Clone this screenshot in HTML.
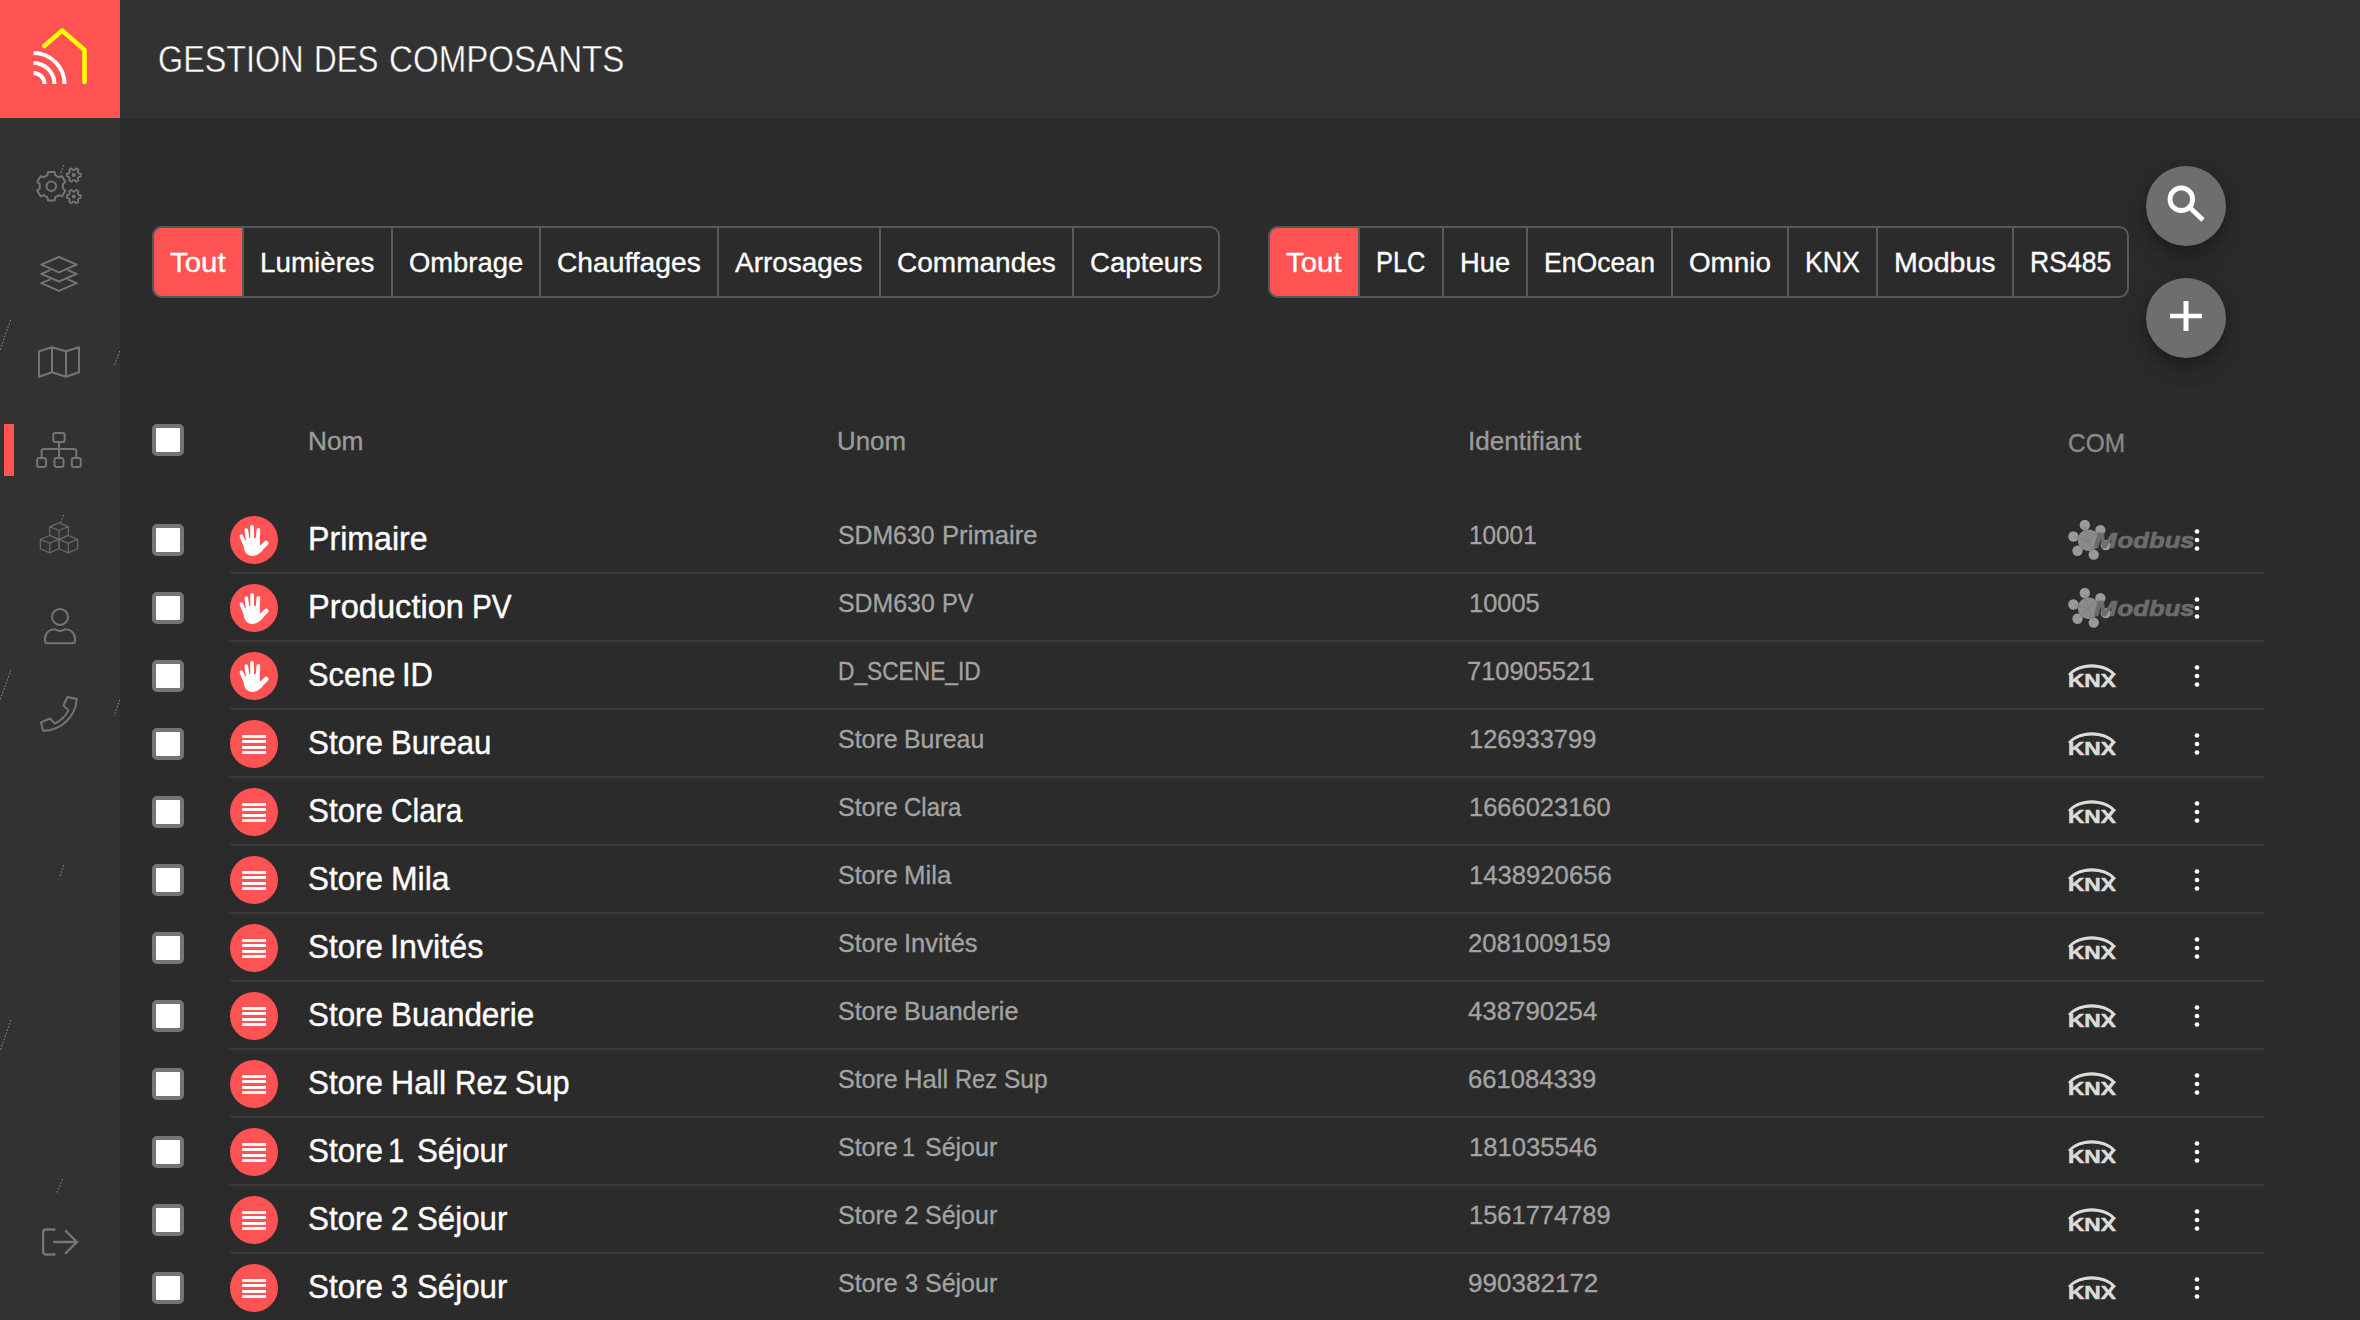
<!DOCTYPE html>
<html lang="fr"><head><meta charset="utf-8"><title>Gestion des composants</title>
<style>
html,body{margin:0;padding:0}
body{width:2360px;height:1320px;overflow:hidden;background:#2b2b2b;position:relative;font-family:"Liberation Sans",sans-serif;color:#fff}
h1{margin:0;font-weight:400}
.t{position:absolute;left:0;line-height:0;white-space:nowrap;font-weight:400}
.t span{position:absolute;top:0;line-height:0;transform-origin:0 0;white-space:nowrap}
h1.t{font-size:37.62px;color:#fff;-webkit-text-stroke:0.45px #323232}
.tab{font-size:28.42px;color:#fff;-webkit-text-stroke:0.35px #fff}
.th{font-size:25.98px;color:#9c9c9c;-webkit-text-stroke:0.32px #9c9c9c}
.nm{font-size:32.48px;color:#fff;-webkit-text-stroke:0.4px #fff}
.td{font-size:25.98px;color:#a3a3a3;-webkit-text-stroke:0.32px #a3a3a3}
#side{position:absolute;left:0;top:0;width:120px;height:1320px;background:#323232}
#head{position:absolute;left:120px;top:0;width:2240px;height:118px;background:#323232}
#logo{position:absolute;left:0;top:0;width:120px;height:118px;background:#ff5252}
#act{position:absolute;left:4px;top:424px;width:10px;height:52px;background:#ff5252}
.grp{position:absolute;top:226px;height:68px;border:2px solid #595959;border-radius:10px}
.grp i{position:absolute;top:0;width:2px;height:68px;background:#595959}
.grp b{position:absolute;top:-2px;left:-2px;height:68px;background:#ff5252;border:2px solid #4f5959;border-right-width:1px;border-radius:10px 0 0 10px}
.cb{position:absolute;left:152px;width:24px;height:24px;border:4px solid #757575;border-radius:5px;background:#fff}
.ln{position:absolute;left:230px;width:2034px;height:2px;background:#393939}
.av{position:absolute;left:230px;width:48px;height:48px;border-radius:50%;background:#ff5252}
.fab{position:absolute;left:2146px;width:80px;height:80px;border-radius:50%;background:#6e6e6e;box-shadow:0 6px 10px -2px rgba(0,0,0,.2),0 12px 20px 0 rgba(0,0,0,.14),0 2px 36px 0 rgba(0,0,0,.12)}
svg{position:absolute;left:0;top:0;overflow:visible}
</style></head><body>
<div id="head"></div><div id="side"></div>
<header>
<h1 class="t" style="top:59.06px"><span style="left:158.14px;transform:scaleX(0.8605)">GESTION</span> <span style="left:313.77px;transform:scaleX(0.8337)">DES</span> <span style="left:388.57px;transform:scaleX(0.8801)">COMPOSANTS</span></h1>
</header>
<nav><div id="logo"></div><div id="act"></div></nav>
<main>
<section class="filters">
<div class="grp" role="group" aria-label="Type" style="left:152px;width:1064.17px"><b style="width:87.92px"></b><i style="left:87.92px"></i><i style="left:236.57px"></i><i style="left:384.85px"></i><i style="left:562.89px"></i><i style="left:724.53px"></i><i style="left:917.61px"></i></div>
<div class="t tab" style="top:261.95px"><span style="left:170.00px;transform:scaleX(1.0364)">Tout</span></div>
<div class="t tab" style="top:261.95px"><span style="left:259.96px;transform:scaleX(0.9788)">Lumières</span></div>
<div class="t tab" style="top:261.95px"><span style="left:408.61px;transform:scaleX(0.9642)">Ombrage</span></div>
<div class="t tab" style="top:261.95px"><span style="left:556.86px;transform:scaleX(0.9931)">Chauffages</span></div>
<div class="t tab" style="top:261.95px"><span style="left:734.89px;transform:scaleX(0.9840)">Arrosages</span></div>
<div class="t tab" style="top:261.95px"><span style="left:896.54px;transform:scaleX(0.9863)">Commandes</span></div>
<div class="t tab" style="top:261.95px"><span style="left:1089.64px;transform:scaleX(0.9741)">Capteurs</span></div>
<div class="grp" role="group" aria-label="Protocole" style="left:1268px;width:857.38px"><b style="width:87.92px"></b><i style="left:87.92px"></i><i style="left:172.00px"></i><i style="left:256.26px"></i><i style="left:401.09px"></i><i style="left:517.15px"></i><i style="left:606.48px"></i><i style="left:742.30px"></i></div>
<div class="t tab" style="top:261.95px"><span style="left:1286.00px;transform:scaleX(1.0364)">Tout</span></div>
<div class="t tab" style="top:261.78px;font-size:28.92px"><span style="left:1376.16px;transform:scaleX(0.8782)">PLC</span></div>
<div class="t tab" style="top:261.95px"><span style="left:1460.08px;transform:scaleX(0.9614)">Hue</span></div>
<div class="t tab" style="top:261.95px"><span style="left:1544.38px;transform:scaleX(0.9366)">EnOcean</span></div>
<div class="t tab" style="top:261.95px"><span style="left:1689.12px;transform:scaleX(0.9783)">Omnio</span></div>
<div class="t tab" style="top:261.78px;font-size:28.92px"><span style="left:1805.31px;transform:scaleX(0.9234)">KNX</span></div>
<div class="t tab" style="top:261.95px"><span style="left:1894.47px;transform:scaleX(1.0051)">Modbus</span></div>
<div class="t tab" style="top:261.78px;font-size:28.92px"><span style="left:2030.46px;transform:scaleX(0.9185)">RS485</span></div>
<div class="fab" style="top:166px"></div><div class="fab" style="top:278px"></div>
</section>
<section class="list">
<div class="head"><div class="cb" style="top:424px"></div>
<div class="t th" style="top:441.20px"><span style="left:307.97px;transform:scaleX(1.0129)">Nom</span></div>
<div class="t th" style="top:441.20px"><span style="left:837.01px;transform:scaleX(0.9952)">Unom</span></div>
<div class="t th" style="top:441.20px"><span style="left:1467.99px;transform:scaleX(1.0048)">Identifiant</span></div>
<div class="t th" style="top:443.04px;font-size:26.44px;color:#8a8a8a;-webkit-text-stroke-color:#8a8a8a"><span style="left:2068.07px;transform:scaleX(0.9252)">COM</span></div>
</div>
<div class="row"><div class="cb" style="top:524px"></div><div class="av" style="top:516px"></div>
<div class="t nm" style="top:538.95px"><span style="left:308.02px;transform:scaleX(0.9898)">Primaire</span></div>
<div class="t td" style="top:535.40px"><span style="left:838.05px;transform:scaleX(0.9549)">SDM630</span> <span style="left:941.86px;transform:scaleX(0.9877)">Primaire</span></div>
<div class="t td" style="top:535.23px;font-size:25.6px"><span style="left:1469.05px;transform:scaleX(0.9507)">10001</span></div>
<div class="ln" style="top:572px"></div>
</div>
<div class="row"><div class="cb" style="top:592px"></div><div class="av" style="top:584px"></div>
<div class="t nm" style="top:606.95px"><span style="left:307.99px;transform:scaleX(1.0049)">Production</span> <span style="left:471.68px;transform:scaleX(0.9167)">PV</span></div>
<div class="t td" style="top:603.24px;font-size:26.44px"><span style="left:838.06px;transform:scaleX(0.9402)">SDM630</span> <span style="left:942.04px;transform:scaleX(0.8963)">PV</span></div>
<div class="t td" style="top:603.23px;font-size:25.6px"><span style="left:1469.01px;transform:scaleX(0.9943)">10005</span></div>
<div class="ln" style="top:640px"></div>
</div>
<div class="row"><div class="cb" style="top:660px"></div><div class="av" style="top:652px"></div>
<div class="t nm" style="top:674.95px"><span style="left:308.05px;transform:scaleX(0.9487)">Scene</span> <span style="left:402.44px;transform:scaleX(0.9530)">ID</span></div>
<div class="t td" style="top:671.24px;font-size:26.44px"><span style="left:838.28px;transform:scaleX(0.8596)">D_SCENE_ID</span></div>
<div class="t td" style="top:671.23px;font-size:25.6px"><span style="left:1467.01px;transform:scaleX(0.9936)">710905521</span></div>
<div class="ln" style="top:708px"></div>
</div>
<div class="row"><div class="cb" style="top:728px"></div><div class="av" style="top:720px"></div>
<div class="t nm" style="top:742.95px"><span style="left:308.03px;transform:scaleX(0.9657)">Store</span> <span style="left:390.94px;transform:scaleX(0.9588)">Bureau</span></div>
<div class="t td" style="top:739.40px"><span style="left:838.04px;transform:scaleX(0.9625)">Store</span> <span style="left:904.35px;transform:scaleX(0.9587)">Bureau</span></div>
<div class="t td" style="top:739.23px;font-size:25.6px"><span style="left:1469.01px;transform:scaleX(0.9937)">126933799</span></div>
<div class="ln" style="top:776px"></div>
</div>
<div class="row"><div class="cb" style="top:796px"></div><div class="av" style="top:788px"></div>
<div class="t nm" style="top:810.95px"><span style="left:308.03px;transform:scaleX(0.9657)">Store</span> <span style="left:390.94px;transform:scaleX(0.9188)">Clara</span></div>
<div class="t td" style="top:807.40px"><span style="left:838.04px;transform:scaleX(0.9625)">Store</span> <span style="left:904.35px;transform:scaleX(0.9247)">Clara</span></div>
<div class="t td" style="top:807.23px;font-size:25.6px"><span style="left:1469.00px;transform:scaleX(0.9954)">1666023160</span></div>
<div class="ln" style="top:844px"></div>
</div>
<div class="row"><div class="cb" style="top:864px"></div><div class="av" style="top:856px"></div>
<div class="t nm" style="top:878.95px"><span style="left:308.03px;transform:scaleX(0.9657)">Store</span> <span style="left:390.89px;transform:scaleX(0.9833)">Mila</span></div>
<div class="t td" style="top:875.40px"><span style="left:838.04px;transform:scaleX(0.9625)">Store</span> <span style="left:904.29px;transform:scaleX(0.9918)">Mila</span></div>
<div class="t td" style="top:875.23px;font-size:25.6px"><span style="left:1469.00px;transform:scaleX(1.0025)">1438920656</span></div>
<div class="ln" style="top:912px"></div>
</div>
<div class="row"><div class="cb" style="top:932px"></div><div class="av" style="top:924px"></div>
<div class="t nm" style="top:946.95px"><span style="left:308.03px;transform:scaleX(0.9657)">Store</span> <span style="left:389.88px;transform:scaleX(0.9944)">Invités</span></div>
<div class="t td" style="top:943.40px"><span style="left:838.04px;transform:scaleX(0.9625)">Store</span> <span style="left:904.31px;transform:scaleX(0.9807)">Invités</span></div>
<div class="t td" style="top:943.23px;font-size:25.6px"><span style="left:1468.00px;transform:scaleX(1.0025)">2081009159</span></div>
<div class="ln" style="top:980px"></div>
</div>
<div class="row"><div class="cb" style="top:1000px"></div><div class="av" style="top:992px"></div>
<div class="t nm" style="top:1014.95px"><span style="left:308.03px;transform:scaleX(0.9657)">Store</span> <span style="left:390.92px;transform:scaleX(0.9678)">Buanderie</span></div>
<div class="t td" style="top:1011.40px"><span style="left:838.04px;transform:scaleX(0.9625)">Store</span> <span style="left:904.34px;transform:scaleX(0.9660)">Buanderie</span></div>
<div class="t td" style="top:1011.23px;font-size:25.6px"><span style="left:1468.00px;transform:scaleX(1.0094)">438790254</span></div>
<div class="ln" style="top:1048px"></div>
</div>
<div class="row"><div class="cb" style="top:1068px"></div><div class="av" style="top:1060px"></div>
<div class="t nm" style="top:1082.95px"><span style="left:308.03px;transform:scaleX(0.9657)">Store</span> <span style="left:390.89px;transform:scaleX(0.9867)">Hall</span> <span style="left:454.77px;transform:scaleX(0.9116)">Rez</span> <span style="left:515.15px;transform:scaleX(0.9448)">Sup</span></div>
<div class="t td" style="top:1079.40px"><span style="left:838.04px;transform:scaleX(0.9625)">Store</span> <span style="left:904.30px;transform:scaleX(0.9866)">Hall</span> <span style="left:955.42px;transform:scaleX(0.9108)">Rez</span> <span style="left:1003.69px;transform:scaleX(0.9451)">Sup</span></div>
<div class="t td" style="top:1079.23px;font-size:25.6px"><span style="left:1468.00px;transform:scaleX(1.0016)">661084339</span></div>
<div class="ln" style="top:1116px"></div>
</div>
<div class="row"><div class="cb" style="top:1136px"></div><div class="av" style="top:1128px"></div>
<div class="t nm" style="top:1150.95px"><span style="left:308.03px;transform:scaleX(0.9657)">Store</span> <span style="left:387.56px;transform:scaleX(0.9000)">1</span> <span style="left:416.82px;transform:scaleX(0.9621)">Séjour</span></div>
<div class="t td" style="top:1147.40px"><span style="left:838.04px;transform:scaleX(0.9625)">Store</span> <span style="left:901.67px;transform:scaleX(0.9000)">1</span> <span style="left:925.04px;transform:scaleX(0.9621)">Séjour</span></div>
<div class="t td" style="top:1147.23px;font-size:25.6px"><span style="left:1469.00px;transform:scaleX(1.0016)">181035546</span></div>
<div class="ln" style="top:1184px"></div>
</div>
<div class="row"><div class="cb" style="top:1204px"></div><div class="av" style="top:1196px"></div>
<div class="t nm" style="top:1218.95px"><span style="left:308.03px;transform:scaleX(0.9657)">Store</span> <span style="left:390.86px;transform:scaleX(1.0000)">2</span> <span style="left:416.82px;transform:scaleX(0.9621)">Séjour</span></div>
<div class="t td" style="top:1215.40px"><span style="left:838.04px;transform:scaleX(0.9625)">Store</span> <span style="left:904.27px;transform:scaleX(1.0000)">2</span> <span style="left:925.04px;transform:scaleX(0.9621)">Séjour</span></div>
<div class="t td" style="top:1215.23px;font-size:25.6px"><span style="left:1469.00px;transform:scaleX(0.9954)">1561774789</span></div>
<div class="ln" style="top:1252px"></div>
</div>
<div class="row"><div class="cb" style="top:1272px"></div><div class="av" style="top:1264px"></div>
<div class="t nm" style="top:1286.95px"><span style="left:308.03px;transform:scaleX(0.9657)">Store</span> <span style="left:390.92px;transform:scaleX(0.9375)">3</span> <span style="left:416.82px;transform:scaleX(0.9621)">Séjour</span></div>
<div class="t td" style="top:1283.40px"><span style="left:838.04px;transform:scaleX(0.9625)">Store</span> <span style="left:904.67px;transform:scaleX(0.9000)">3</span> <span style="left:925.04px;transform:scaleX(0.9621)">Séjour</span></div>
<div class="t td" style="top:1283.23px;font-size:25.6px"><span style="left:1467.98px;transform:scaleX(1.0175)">990382172</span></div>
</div>
</section></main>
<svg width="2360" height="1320" viewBox="0 0 2360 1320">
<g fill="none" stroke-linecap="round" stroke-linejoin="round">
<path d="M44.3 46 L62.2 30.6 L84.5 50 V82" stroke="#ffff00" stroke-width="4.6"/>
</g>
<g fill="none" stroke="#fff" stroke-width="4" stroke-linecap="butt">
<path d="M33.5 73 A11 11 0 0 1 44.5 84"/>
<path d="M33.5 63 A21 21 0 0 1 54.5 84"/>
<path d="M33.5 53 A31 31 0 0 1 64.5 84"/>
</g>
<g fill="none" stroke="#757575" stroke-width="2" stroke-linejoin="round" stroke-linecap="round">
<path d="M55.14 175.04 L54.61 171.88 L47.99 171.88 L47.46 175.04 L43.56 177.29 L40.55 176.17 L37.24 181.90 L39.72 183.95 L39.72 188.45 L37.24 190.50 L40.55 196.23 L43.56 195.11 L47.46 197.36 L47.99 200.52 L54.61 200.52 L55.14 197.36 L59.04 195.11 L62.05 196.23 L65.36 190.50 L62.88 188.45 L62.88 183.95 L65.36 181.90 L62.05 176.17 L59.04 177.29Z"/>
<circle cx="51.3" cy="186.2" r="4.8"/>
<path d="M78.69 176.88 L80.77 176.45 L80.77 173.75 L78.69 173.32 L77.78 171.76 L78.46 169.74 L76.11 168.39 L74.70 169.98 L72.90 169.98 L71.49 168.39 L69.14 169.74 L69.82 171.76 L68.91 173.32 L66.83 173.75 L66.83 176.45 L68.91 176.88 L69.82 178.44 L69.14 180.46 L71.49 181.81 L72.90 180.22 L74.70 180.22 L76.11 181.81 L78.46 180.46 L77.78 178.44Z" stroke-width="1.8"/>
<circle cx="73.8" cy="175.1" r="1.3" fill="#757575" stroke-width="1.4"/>
<path d="M78.69 198.38 L80.77 197.95 L80.77 195.25 L78.69 194.82 L77.78 193.26 L78.46 191.24 L76.11 189.89 L74.70 191.48 L72.90 191.48 L71.49 189.89 L69.14 191.24 L69.82 193.26 L68.91 194.82 L66.83 195.25 L66.83 197.95 L68.91 198.38 L69.82 199.94 L69.14 201.96 L71.49 203.31 L72.90 201.72 L74.70 201.72 L76.11 203.31 L78.46 201.96 L77.78 199.94Z" stroke-width="1.8"/>
<circle cx="73.8" cy="196.6" r="1.3" fill="#757575" stroke-width="1.4"/>
<path d="M59 257 L76.7 264.7 L59 272.3 L41.3 264.7Z"/>
<path d="M49.6 270.3 L41.3 273.8 L59 281.5 L76.7 273.8 L68.4 270.3"/>
<path d="M49.6 279.6 L41.3 283.1 L59 290.9 L76.7 283.1 L68.4 279.6"/>
<path d="M39 351.3 L52 347.2 L66 351.3 L79 347.2 V372.2 L66 376.8 L52 372.2 L39 376.8Z M52 347.2 V372.2 M66 351.3 V376.8"/>
<rect x="53.3" y="433" width="11.4" height="9" rx="2"/>
<path d="M59 442 V458 M41.6 458 V451 Q41.6 448.9 43.7 448.9 H74.2 Q76.3 448.9 76.3 451 V458"/>
<rect x="37.1" y="458" width="9" height="9" rx="2"/>
<rect x="54.5" y="458" width="9" height="9" rx="2"/>
<rect x="71.8" y="458" width="9" height="9" rx="2"/>
<circle cx="60" cy="616.9" r="8"/>
<path d="M47.5 643.2 H72.5 Q75 643.2 75 640.7 V639 C75 633 70.5 629.3 65.5 629.3 C63.5 629.3 62.5 631 60 631 C57.5 631 56.5 629.3 54.5 629.3 C49.500 629.3 45 633 45 639 V640.7 Q45 643.2 47.5 643.2Z"/>
<path d="M67.4 697 L76.7 699 A33.8 33.8 0 0 1 43.1 730.8 L41 722.4 L49.9 718.5 L54.9 723.5 A29 29 0 0 0 68.5 710.4 L63.5 705.6Z"/>
</g>
<g fill="none" stroke="#676767" stroke-width="1.3" stroke-linejoin="round" stroke-linecap="round">
<path d="M59 522.8 L68.3 526.65 L59 530.5 L49.7 526.65Z M49.7 526.65 V535.4499999999999 L59 539.5 L68.3 535.4499999999999 V526.65 M59 530.5 V539.5"/>
<path d="M49.7 535.5 L59.0 539.35 L49.7 543.2 L40.400000000000006 539.35Z M40.400000000000006 539.35 V548.75 L49.7 552.8000000000001 L59.0 548.75 V539.35 M49.7 543.2 V552.8000000000001"/>
<path d="M68.3 535.5 L77.6 539.35 L68.3 543.2 L59.0 539.35Z M59.0 539.35 V548.75 L68.3 552.8000000000001 L77.6 548.75 V539.35 M68.3 543.2 V552.8000000000001"/>
</g>
<g fill="none" stroke="#757575" stroke-width="2.3" stroke-linejoin="miter">
<path d="M55.4 1229.5 H46.1 Q43.1 1229.5 43.1 1232.5 V1251.5 Q43.1 1254.5 46.1 1254.5 H55.4"/>
<path d="M53.1 1242 H76.5 M65.1 1230.4 L77 1242 L65.1 1253.6"/>
</g>
<g stroke="#8a8a8a" stroke-width="1" stroke-dasharray="1.7 1.6" fill="none">
<path d="M10.6 320 L0 350.5"/>
<path d="M119.8 351 L114.2 366"/>
<path d="M63.6 165 L60.1 175"/>
<path d="M10.9 669.8 L0 700"/>
<path d="M119.9 699.7 L113.9 716"/>
<path d="M63.5 515 L60.4 523.5"/>
<path d="M63.8 865 L60.1 876"/>
<path d="M10.9 1020 L0 1051"/>
<path d="M62.8 1179 L56.1 1194"/>
</g>
<circle cx="2181.3" cy="199.2" r="11.3" fill="none" stroke="#fff" stroke-width="4.9"/>
<path d="M2189.3 206.9 L2202.9 220" stroke="#fff" stroke-width="4.9" fill="none"/>
<path d="M2170 313.8 H2202 V318.2 H2170Z M2183.5 301 H2188.5 V331 H2183.5Z" fill="#fff"/>
<g transform="translate(0 0)" stroke="#fff" fill="none" stroke-linecap="round" stroke-linejoin="round">
<path d="M241.4 536.2 L246.3 548" stroke-width="3.7"/>
<path d="M246.2 530 L248.6 545" stroke-width="3.7"/>
<path d="M252 527 L252.3 545" stroke-width="3.8"/>
<path d="M258.4 530 L257.3 546" stroke-width="3.8"/>
<path d="M266.3 543 L258 551" stroke-width="4.6"/>
<path d="M244.3 543 L247.5 539.2 L259 538.2 L259.3 546 L262.500 549.5 C259 553.5 256 555.3 252.3 555.3 C248 555.3 245.8 553 244.6 549Z" fill="#fff" stroke-width="1.2"/>
</g>
<circle cx="2197" cy="531.5" r="2.35" fill="#fff"/>
<circle cx="2197" cy="540" r="2.35" fill="#fff"/>
<circle cx="2197" cy="548.5" r="2.35" fill="#fff"/>
<g transform="translate(0 0)">
<circle cx="2084.8" cy="525" r="5.2" fill="#9a9a9a"/>
<circle cx="2100.4" cy="530.1" r="5.2" fill="#9a9a9a"/>
<circle cx="2073.4" cy="536.5" r="5.2" fill="#9a9a9a"/>
<circle cx="2077.5" cy="550.8" r="5.2" fill="#9a9a9a"/>
<circle cx="2093.7" cy="554.6" r="5.2" fill="#9a9a9a"/>
<circle cx="2105.8" cy="545.1" r="5.2" fill="#9a9a9a"/>
<circle cx="2088.6" cy="540.2" r="10.8" fill="#8b8b8b"/>
<g stroke="#7a7a7a" stroke-width="0.8" fill="none">
<path d="M2088.6 540.6 L2084.8 526"/>
<path d="M2088.6 540.6 L2099.4 530.6"/>
<path d="M2088.6 540.6 L2074.8 536.8"/>
<path d="M2088.6 540.6 L2078.5 550"/>
<path d="M2088.6 540.6 L2093.4 553"/>
</g>
<text x="2093.5" y="547.6" font-family="Liberation Sans, sans-serif" font-weight="700" font-style="italic" font-size="21.2" fill="#6c6c6c" stroke="#6c6c6c" stroke-width="0.7" lengthAdjust="spacingAndGlyphs"><tspan x="2093.8" textLength="23" lengthAdjust="spacingAndGlyphs">M</tspan><tspan x="2117.6" textLength="77" lengthAdjust="spacingAndGlyphs">odbus</tspan></text>
</g>
<g transform="translate(0 68)" stroke="#fff" fill="none" stroke-linecap="round" stroke-linejoin="round">
<path d="M241.4 536.2 L246.3 548" stroke-width="3.7"/>
<path d="M246.2 530 L248.6 545" stroke-width="3.7"/>
<path d="M252 527 L252.3 545" stroke-width="3.8"/>
<path d="M258.4 530 L257.3 546" stroke-width="3.8"/>
<path d="M266.3 543 L258 551" stroke-width="4.6"/>
<path d="M244.3 543 L247.5 539.2 L259 538.2 L259.3 546 L262.500 549.5 C259 553.5 256 555.3 252.3 555.3 C248 555.3 245.8 553 244.6 549Z" fill="#fff" stroke-width="1.2"/>
</g>
<circle cx="2197" cy="599.5" r="2.35" fill="#fff"/>
<circle cx="2197" cy="608" r="2.35" fill="#fff"/>
<circle cx="2197" cy="616.5" r="2.35" fill="#fff"/>
<g transform="translate(0 68)">
<circle cx="2084.8" cy="525" r="5.2" fill="#9a9a9a"/>
<circle cx="2100.4" cy="530.1" r="5.2" fill="#9a9a9a"/>
<circle cx="2073.4" cy="536.5" r="5.2" fill="#9a9a9a"/>
<circle cx="2077.5" cy="550.8" r="5.2" fill="#9a9a9a"/>
<circle cx="2093.7" cy="554.6" r="5.2" fill="#9a9a9a"/>
<circle cx="2105.8" cy="545.1" r="5.2" fill="#9a9a9a"/>
<circle cx="2088.6" cy="540.2" r="10.8" fill="#8b8b8b"/>
<g stroke="#7a7a7a" stroke-width="0.8" fill="none">
<path d="M2088.6 540.6 L2084.8 526"/>
<path d="M2088.6 540.6 L2099.4 530.6"/>
<path d="M2088.6 540.6 L2074.8 536.8"/>
<path d="M2088.6 540.6 L2078.5 550"/>
<path d="M2088.6 540.6 L2093.4 553"/>
</g>
<text x="2093.5" y="547.6" font-family="Liberation Sans, sans-serif" font-weight="700" font-style="italic" font-size="21.2" fill="#6c6c6c" stroke="#6c6c6c" stroke-width="0.7" lengthAdjust="spacingAndGlyphs"><tspan x="2093.8" textLength="23" lengthAdjust="spacingAndGlyphs">M</tspan><tspan x="2117.6" textLength="77" lengthAdjust="spacingAndGlyphs">odbus</tspan></text>
</g>
<g transform="translate(0 136)" stroke="#fff" fill="none" stroke-linecap="round" stroke-linejoin="round">
<path d="M241.4 536.2 L246.3 548" stroke-width="3.7"/>
<path d="M246.2 530 L248.6 545" stroke-width="3.7"/>
<path d="M252 527 L252.3 545" stroke-width="3.8"/>
<path d="M258.4 530 L257.3 546" stroke-width="3.8"/>
<path d="M266.3 543 L258 551" stroke-width="4.6"/>
<path d="M244.3 543 L247.5 539.2 L259 538.2 L259.3 546 L262.500 549.5 C259 553.5 256 555.3 252.3 555.3 C248 555.3 245.8 553 244.6 549Z" fill="#fff" stroke-width="1.2"/>
</g>
<circle cx="2197" cy="667.5" r="2.35" fill="#fff"/>
<circle cx="2197" cy="676" r="2.35" fill="#fff"/>
<circle cx="2197" cy="684.5" r="2.35" fill="#fff"/>
<g transform="translate(0 0)" fill="#dcdcdc">
<path d="M2067.9 674.4 C2078 660.7 2105.5 660.7 2116 674.4 L2113.4 675.6 C2104 664.9 2079.5 664.9 2070.4 675.6Z"/>
<text x="2067.9" y="687.3" font-family="Liberation Sans, sans-serif" font-weight="700" font-size="18.7" stroke="#dcdcdc" stroke-width="0.5" textLength="48" lengthAdjust="spacingAndGlyphs">KNX</text>
</g>
<rect x="242.2" y="735" width="23.8" height="2.9" fill="#fff"/>
<rect x="242.2" y="740" width="23.8" height="2.9" fill="#fff"/>
<rect x="242.2" y="746" width="23.8" height="2.9" fill="#fff"/>
<rect x="242.2" y="751" width="23.8" height="2.9" fill="#fff"/>
<circle cx="2197" cy="735.5" r="2.35" fill="#fff"/>
<circle cx="2197" cy="744" r="2.35" fill="#fff"/>
<circle cx="2197" cy="752.5" r="2.35" fill="#fff"/>
<g transform="translate(0 68)" fill="#dcdcdc">
<path d="M2067.9 674.4 C2078 660.7 2105.5 660.7 2116 674.4 L2113.4 675.6 C2104 664.9 2079.5 664.9 2070.4 675.6Z"/>
<text x="2067.9" y="687.3" font-family="Liberation Sans, sans-serif" font-weight="700" font-size="18.7" stroke="#dcdcdc" stroke-width="0.5" textLength="48" lengthAdjust="spacingAndGlyphs">KNX</text>
</g>
<rect x="242.2" y="803" width="23.8" height="2.9" fill="#fff"/>
<rect x="242.2" y="808" width="23.8" height="2.9" fill="#fff"/>
<rect x="242.2" y="814" width="23.8" height="2.9" fill="#fff"/>
<rect x="242.2" y="819" width="23.8" height="2.9" fill="#fff"/>
<circle cx="2197" cy="803.5" r="2.35" fill="#fff"/>
<circle cx="2197" cy="812" r="2.35" fill="#fff"/>
<circle cx="2197" cy="820.5" r="2.35" fill="#fff"/>
<g transform="translate(0 136)" fill="#dcdcdc">
<path d="M2067.9 674.4 C2078 660.7 2105.5 660.7 2116 674.4 L2113.4 675.6 C2104 664.9 2079.5 664.9 2070.4 675.6Z"/>
<text x="2067.9" y="687.3" font-family="Liberation Sans, sans-serif" font-weight="700" font-size="18.7" stroke="#dcdcdc" stroke-width="0.5" textLength="48" lengthAdjust="spacingAndGlyphs">KNX</text>
</g>
<rect x="242.2" y="871" width="23.8" height="2.9" fill="#fff"/>
<rect x="242.2" y="876" width="23.8" height="2.9" fill="#fff"/>
<rect x="242.2" y="882" width="23.8" height="2.9" fill="#fff"/>
<rect x="242.2" y="887" width="23.8" height="2.9" fill="#fff"/>
<circle cx="2197" cy="871.5" r="2.35" fill="#fff"/>
<circle cx="2197" cy="880" r="2.35" fill="#fff"/>
<circle cx="2197" cy="888.5" r="2.35" fill="#fff"/>
<g transform="translate(0 204)" fill="#dcdcdc">
<path d="M2067.9 674.4 C2078 660.7 2105.5 660.7 2116 674.4 L2113.4 675.6 C2104 664.9 2079.5 664.9 2070.4 675.6Z"/>
<text x="2067.9" y="687.3" font-family="Liberation Sans, sans-serif" font-weight="700" font-size="18.7" stroke="#dcdcdc" stroke-width="0.5" textLength="48" lengthAdjust="spacingAndGlyphs">KNX</text>
</g>
<rect x="242.2" y="939" width="23.8" height="2.9" fill="#fff"/>
<rect x="242.2" y="944" width="23.8" height="2.9" fill="#fff"/>
<rect x="242.2" y="950" width="23.8" height="2.9" fill="#fff"/>
<rect x="242.2" y="955" width="23.8" height="2.9" fill="#fff"/>
<circle cx="2197" cy="939.5" r="2.35" fill="#fff"/>
<circle cx="2197" cy="948" r="2.35" fill="#fff"/>
<circle cx="2197" cy="956.5" r="2.35" fill="#fff"/>
<g transform="translate(0 272)" fill="#dcdcdc">
<path d="M2067.9 674.4 C2078 660.7 2105.5 660.7 2116 674.4 L2113.4 675.6 C2104 664.9 2079.5 664.9 2070.4 675.6Z"/>
<text x="2067.9" y="687.3" font-family="Liberation Sans, sans-serif" font-weight="700" font-size="18.7" stroke="#dcdcdc" stroke-width="0.5" textLength="48" lengthAdjust="spacingAndGlyphs">KNX</text>
</g>
<rect x="242.2" y="1007" width="23.8" height="2.9" fill="#fff"/>
<rect x="242.2" y="1012" width="23.8" height="2.9" fill="#fff"/>
<rect x="242.2" y="1018" width="23.8" height="2.9" fill="#fff"/>
<rect x="242.2" y="1023" width="23.8" height="2.9" fill="#fff"/>
<circle cx="2197" cy="1007.5" r="2.35" fill="#fff"/>
<circle cx="2197" cy="1016" r="2.35" fill="#fff"/>
<circle cx="2197" cy="1024.5" r="2.35" fill="#fff"/>
<g transform="translate(0 340)" fill="#dcdcdc">
<path d="M2067.9 674.4 C2078 660.7 2105.5 660.7 2116 674.4 L2113.4 675.6 C2104 664.9 2079.5 664.9 2070.4 675.6Z"/>
<text x="2067.9" y="687.3" font-family="Liberation Sans, sans-serif" font-weight="700" font-size="18.7" stroke="#dcdcdc" stroke-width="0.5" textLength="48" lengthAdjust="spacingAndGlyphs">KNX</text>
</g>
<rect x="242.2" y="1075" width="23.8" height="2.9" fill="#fff"/>
<rect x="242.2" y="1080" width="23.8" height="2.9" fill="#fff"/>
<rect x="242.2" y="1086" width="23.8" height="2.9" fill="#fff"/>
<rect x="242.2" y="1091" width="23.8" height="2.9" fill="#fff"/>
<circle cx="2197" cy="1075.5" r="2.35" fill="#fff"/>
<circle cx="2197" cy="1084" r="2.35" fill="#fff"/>
<circle cx="2197" cy="1092.5" r="2.35" fill="#fff"/>
<g transform="translate(0 408)" fill="#dcdcdc">
<path d="M2067.9 674.4 C2078 660.7 2105.5 660.7 2116 674.4 L2113.4 675.6 C2104 664.9 2079.5 664.9 2070.4 675.6Z"/>
<text x="2067.9" y="687.3" font-family="Liberation Sans, sans-serif" font-weight="700" font-size="18.7" stroke="#dcdcdc" stroke-width="0.5" textLength="48" lengthAdjust="spacingAndGlyphs">KNX</text>
</g>
<rect x="242.2" y="1143" width="23.8" height="2.9" fill="#fff"/>
<rect x="242.2" y="1148" width="23.8" height="2.9" fill="#fff"/>
<rect x="242.2" y="1154" width="23.8" height="2.9" fill="#fff"/>
<rect x="242.2" y="1159" width="23.8" height="2.9" fill="#fff"/>
<circle cx="2197" cy="1143.5" r="2.35" fill="#fff"/>
<circle cx="2197" cy="1152" r="2.35" fill="#fff"/>
<circle cx="2197" cy="1160.5" r="2.35" fill="#fff"/>
<g transform="translate(0 476)" fill="#dcdcdc">
<path d="M2067.9 674.4 C2078 660.7 2105.5 660.7 2116 674.4 L2113.4 675.6 C2104 664.9 2079.5 664.9 2070.4 675.6Z"/>
<text x="2067.9" y="687.3" font-family="Liberation Sans, sans-serif" font-weight="700" font-size="18.7" stroke="#dcdcdc" stroke-width="0.5" textLength="48" lengthAdjust="spacingAndGlyphs">KNX</text>
</g>
<rect x="242.2" y="1211" width="23.8" height="2.9" fill="#fff"/>
<rect x="242.2" y="1216" width="23.8" height="2.9" fill="#fff"/>
<rect x="242.2" y="1222" width="23.8" height="2.9" fill="#fff"/>
<rect x="242.2" y="1227" width="23.8" height="2.9" fill="#fff"/>
<circle cx="2197" cy="1211.5" r="2.35" fill="#fff"/>
<circle cx="2197" cy="1220" r="2.35" fill="#fff"/>
<circle cx="2197" cy="1228.5" r="2.35" fill="#fff"/>
<g transform="translate(0 544)" fill="#dcdcdc">
<path d="M2067.9 674.4 C2078 660.7 2105.5 660.7 2116 674.4 L2113.4 675.6 C2104 664.9 2079.5 664.9 2070.4 675.6Z"/>
<text x="2067.9" y="687.3" font-family="Liberation Sans, sans-serif" font-weight="700" font-size="18.7" stroke="#dcdcdc" stroke-width="0.5" textLength="48" lengthAdjust="spacingAndGlyphs">KNX</text>
</g>
<rect x="242.2" y="1279" width="23.8" height="2.9" fill="#fff"/>
<rect x="242.2" y="1284" width="23.8" height="2.9" fill="#fff"/>
<rect x="242.2" y="1290" width="23.8" height="2.9" fill="#fff"/>
<rect x="242.2" y="1295" width="23.8" height="2.9" fill="#fff"/>
<circle cx="2197" cy="1279.5" r="2.35" fill="#fff"/>
<circle cx="2197" cy="1288" r="2.35" fill="#fff"/>
<circle cx="2197" cy="1296.5" r="2.35" fill="#fff"/>
<g transform="translate(0 612)" fill="#dcdcdc">
<path d="M2067.9 674.4 C2078 660.7 2105.5 660.7 2116 674.4 L2113.4 675.6 C2104 664.9 2079.5 664.9 2070.4 675.6Z"/>
<text x="2067.9" y="687.3" font-family="Liberation Sans, sans-serif" font-weight="700" font-size="18.7" stroke="#dcdcdc" stroke-width="0.5" textLength="48" lengthAdjust="spacingAndGlyphs">KNX</text>
</g>
</svg>
</body></html>
